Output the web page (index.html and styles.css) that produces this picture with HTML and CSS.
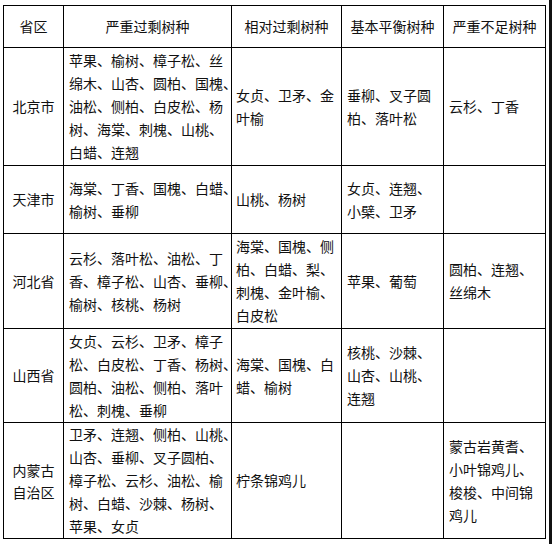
FILE: index.html
```html
<!DOCTYPE html>
<html lang="zh-CN">
<head>
<meta charset="utf-8">
<title>树种表</title>
<link rel="stylesheet" href="styles.css">
</head>
<body>
<div class="page">
  <div class="table">
    <div class="cell head">省区</div>
    <div class="cell head">严重过剩树种</div>
    <div class="cell head">相对过剩树种</div>
    <div class="cell head">基本平衡树种</div>
    <div class="cell head">严重不足树种</div>

    <div class="cell prov">北京市</div>
    <div class="cell">苹果、榆树、樟子松、丝<br>绵木、山杏、圆柏、国槐、<br>油松、侧柏、白皮松、杨<br>树、海棠、刺槐、山桃、<br>白蜡、连翘</div>
    <div class="cell c3">女贞、卫矛、金<br>叶榆</div>
    <div class="cell">垂柳、叉子圆<br>柏、落叶松</div>
    <div class="cell">云杉、丁香</div>

    <div class="cell prov">天津市</div>
    <div class="cell">海棠、丁香、国槐、白蜡、<br>榆树、垂柳</div>
    <div class="cell c3">山桃、杨树</div>
    <div class="cell">女贞、连翘、<br>小檗、卫矛</div>
    <div class="cell"></div>

    <div class="cell prov">河北省</div>
    <div class="cell">云杉、落叶松、油松、丁<br>香、樟子松、山杏、垂柳、<br>榆树、核桃、杨树</div>
    <div class="cell c3">海棠、国槐、侧<br>柏、白蜡、梨、<br>刺槐、金叶榆、<br>白皮松</div>
    <div class="cell">苹果、葡萄</div>
    <div class="cell">圆柏、连翘、<br>丝绵木</div>

    <div class="cell prov">山西省</div>
    <div class="cell">女贞、云杉、卫矛、樟子<br>松、白皮松、丁香、杨树、<br>圆柏、油松、侧柏、落叶<br>松、刺槐、垂柳</div>
    <div class="cell c3">海棠、国槐、白<br>蜡、榆树</div>
    <div class="cell">核桃、沙棘、<br>山杏、山桃、<br>连翘</div>
    <div class="cell"></div>

    <div class="cell prov tight">内蒙古<br>自治区</div>
    <div class="cell">卫矛、连翘、侧柏、山桃、<br>山杏、垂柳、叉子圆柏、<br>樟子松、云杉、油松、榆<br>树、白蜡、沙棘、杨树、<br>苹果、女贞</div>
    <div class="cell c3">柠条锦鸡儿</div>
    <div class="cell"></div>
    <div class="cell">蒙古岩黄耆、<br>小叶锦鸡儿、<br>梭梭、中间锦<br>鸡儿</div>
  </div>
</div>
</body>
</html>
```

FILE: styles.css
```css
html, body {
  margin: 0;
  padding: 0;
  background: #fff;
}

.page {
  box-sizing: border-box;
  width: 552px;
  min-height: 544px;
  padding: 5px 0 0 3px;
  border-right: 3px solid #111;
  display: flex;
  align-items: flex-start;
}

.table {
  display: grid;
  grid-template-columns: 59px 167px 109px 101px 101px;
  grid-template-rows: 41px 117px 67px 94px 93px 115px;
  gap: 1px;
  padding: 1px;
  background: #000;
  font-family: "Noto Sans CJK SC", "Noto Sans", sans-serif;
  font-size: 14px;
  line-height: 23px;
  color: #111;
}

.cell {
  background: #fff;
  display: flex;
  align-items: center;
  padding: 0 3px 0 5px;
  white-space: nowrap;
  min-width: 0;
}

.cell.c3 {
  padding-left: 4px;
}

.cell.head,
.cell.prov {
  justify-content: center;
  text-align: center;
  padding: 0;
}

.cell.tight {
  line-height: 22px;
}
```
